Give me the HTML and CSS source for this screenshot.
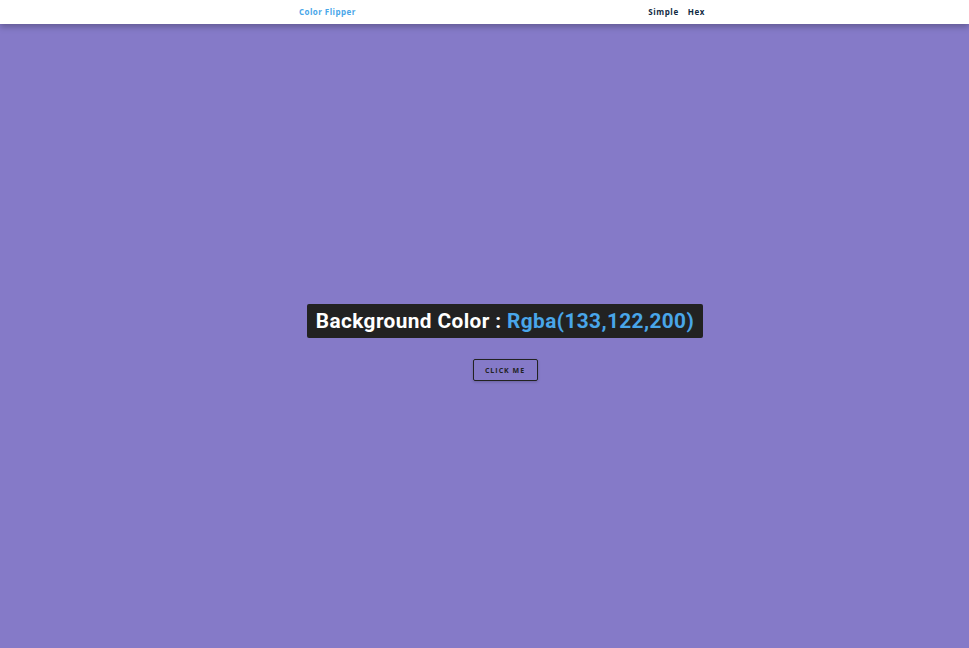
FILE: index.html
```html
<!DOCTYPE html>
<html>
<head>
<meta charset="utf-8">
<link rel="stylesheet" href="styles.css">
</head>
<body>
<nav class="nav">
  <div class="nav-center">
    <h4 class="logo">Color Flipper</h4>
    <ul class="links">
      <li><a href="#">Simple</a></li>
      <li><a href="#">Hex</a></li>
    </ul>
  </div>
</nav>
<main class="main">
  <div class="container">
    <h2 class="title">Background Color : <span class="color">Rgba(133,122,200)</span></h2>
    <button class="btn">Click Me</button>
  </div>
</main>
</body>
</html>
```
FILE: styles.css
```css
* { box-sizing: border-box; margin: 0; padding: 0; }
html, body { height: 100%; }
body {
  background: #857ac8;
  font-family: "Open Sans", "Liberation Sans", sans-serif;
  overflow: hidden;
}
.nav {
  height: 24px;
  background: #fff;
  box-shadow: 0 3px 6px rgba(0,0,0,0.25);
  position: relative;
  z-index: 1;
}
.nav-center {
  width: 406px;
  margin-left: 299px;
  height: 100%;
  display: flex;
  align-items: center;
  justify-content: space-between;
  padding-bottom: 1px;
}
.logo {
  color: #49a6e9;
  font-size: 8px;
  line-height: 10px;
  font-weight: 700;
  letter-spacing: 0.45px;
}
.links {
  list-style: none;
  display: flex;
  gap: 9px;
  line-height: 10px;
}
.links a {
  display: block;
  text-decoration: none;
  color: #102a42;
  font-size: 8px;
  line-height: 10px;
  font-weight: 700;
  letter-spacing: 0.6px;
}
.main {
  height: calc(100% - 24px);
  display: flex;
  align-items: center;
  justify-content: center;
  padding-left: 41px;
  padding-top: 13px;
}
.container {
  display: flex;
  flex-direction: column;
  align-items: center;
}
.title {
  background: #222;
  color: #fff;
  font-family: Roboto, "Liberation Sans", sans-serif;
  font-weight: 700;
  font-size: 20.8px;
  line-height: 1;
  padding: 7px 9px 7px 9px;
  border-radius: 2px;
  letter-spacing: 0.4px;
}
.color { color: #49a6e9; }
.btn {
  margin-top: 21px;
  width: 65px;
  height: 22px;
  background: transparent;
  border: 1px solid #222;
  border-radius: 2px;
  color: #222;
  font-family: "Open Sans", "Liberation Sans", sans-serif;
  font-weight: 700;
  font-size: 7px;
  letter-spacing: 1px;
  text-transform: uppercase;
  box-shadow: 0 1px 3px rgba(0,0,0,0.2);
}
```
